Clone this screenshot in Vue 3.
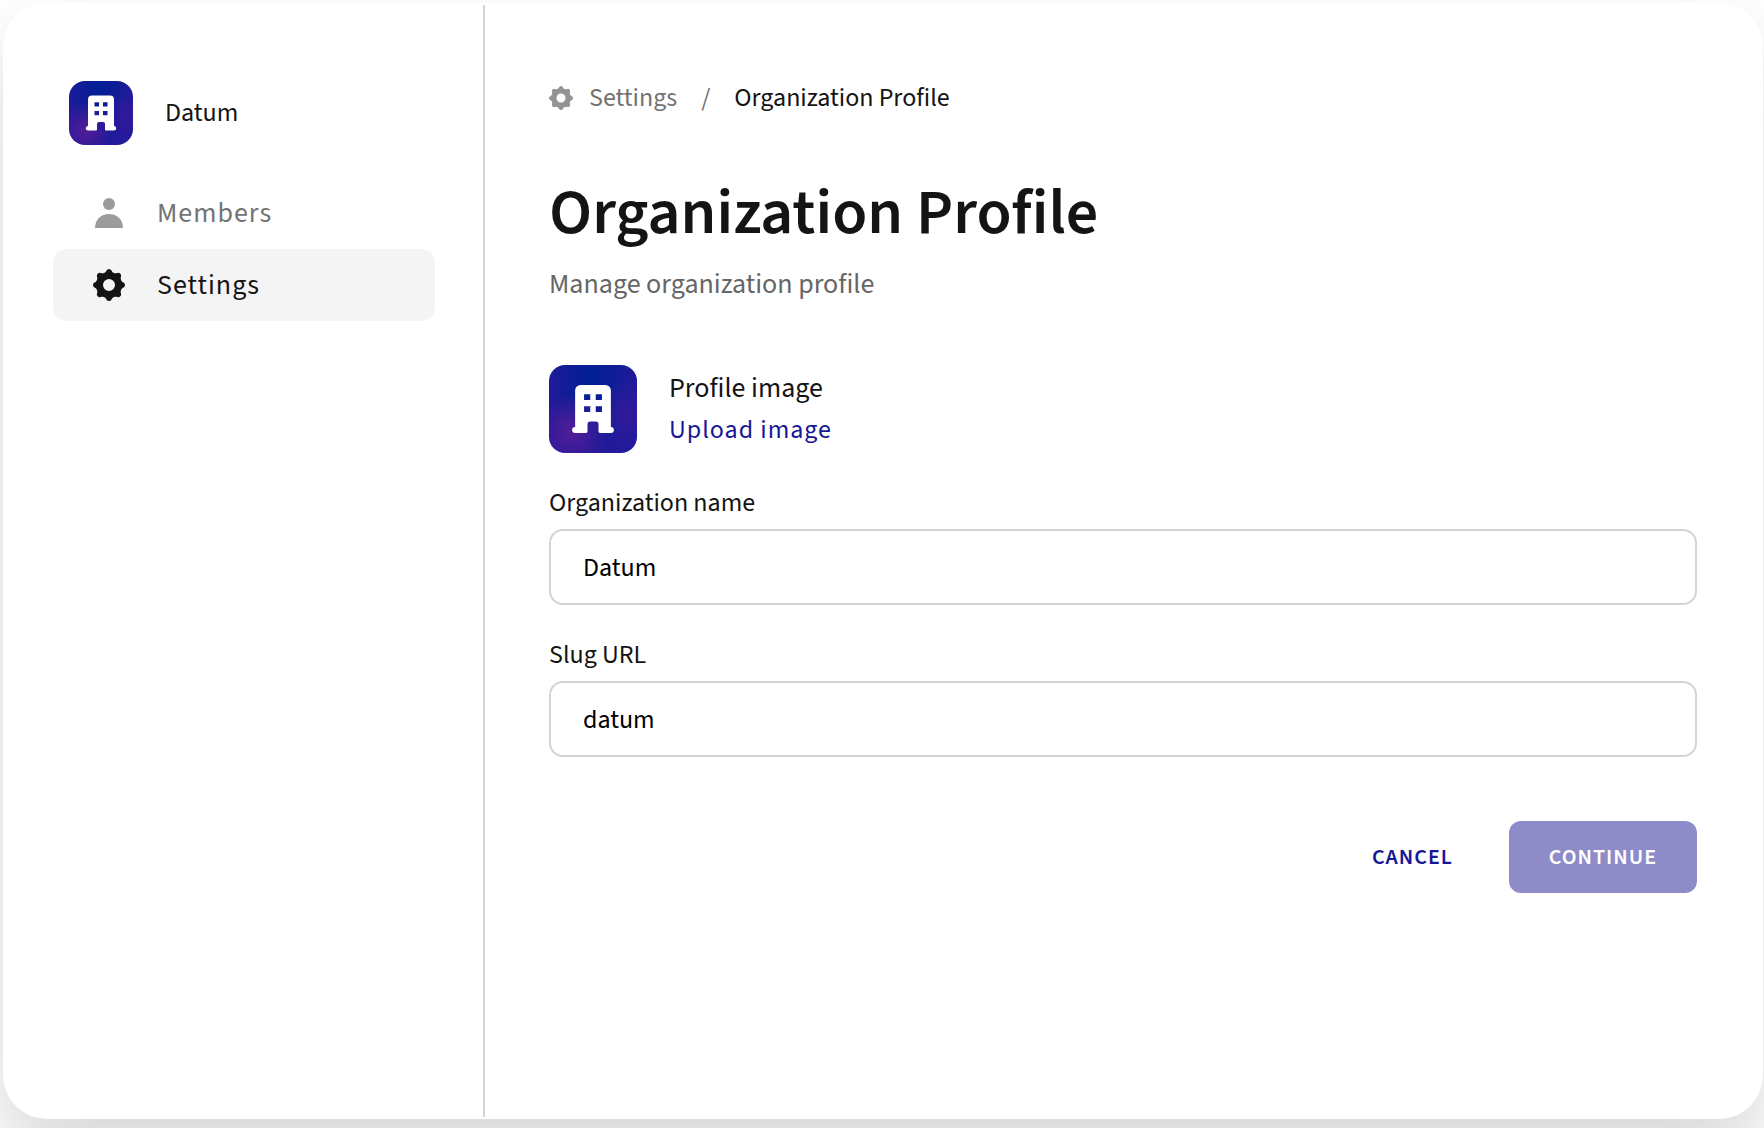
<script setup>
import { ref } from 'vue'

const organizationName = ref('Datum')
const slug = ref('datum')
const teeth = [0, 45, 90, 135, 180, 225, 270, 315]
</script>

<template>
  <div class="page">
    <div class="card">
      <aside class="sidebar">
        <div class="brand">
          <svg class="avatar avatar-small" viewBox="0 0 64 64" aria-hidden="true">
            <path fill="#fff" fill-rule="evenodd" d="M23 14.500h18a4 4 0 0 1 4 4V45a2.200 2.200 0 0 1 0 4.400h-8q-1 0-1-1V43q0-2-2-2h-4q-2 0-2 2v5.400q0 1-1 1h-8a2.200 2.200 0 0 1 0-4.400V18.500a4 4 0 0 1 4-4zM25.500 21.300v4.200h4.500v-4.200zM34 21.300v4.200h4.500v-4.200zM25.500 30v4.200h4.500V30zM34 30v4.200h4.500V30z" />
          </svg>
          <span class="brand-name">Datum</span>
        </div>
        <nav class="menu" aria-label="Organization">
          <a class="menu-item" href="#members">
            <svg class="menu-icon" viewBox="0 0 32 32" aria-hidden="true">
              <circle cx="16" cy="7" r="6" />
              <path d="M2 31C2 22.500 8 17 16 17s14 5.500 14 14z" />
            </svg>
            <span>Members</span>
          </a>
          <a class="menu-item active" href="#settings" aria-current="page">
            <svg class="menu-icon" viewBox="-16 -16 32 32" aria-hidden="true">
              <circle class="gear-ring" r="9.500" />
              <path v-for="angle in teeth" :key="angle" :transform="`rotate(${angle})`" d="M-5.500-11Q-3-13-2.500-14.500Q-1.800-16 0-16T2.500-14.500Q3-13 5.500-11z" />
            </svg>
            <span>Settings</span>
          </a>
        </nav>
      </aside>

      <main class="main">
        <nav class="breadcrumb" aria-label="Breadcrumb">
          <a class="crumb" href="#settings">
            <svg class="crumb-icon" viewBox="-16 -16 32 32" aria-hidden="true">
              <circle class="gear-ring" r="9.500" />
              <path v-for="angle in teeth" :key="angle" :transform="`rotate(${angle})`" d="M-5.500-11Q-3-13-2.500-14.500Q-1.800-16 0-16T2.500-14.500Q3-13 5.500-11z" />
            </svg>
            <span>Settings</span>
          </a>
          <span>/</span>
          <span class="current" aria-current="page">Organization Profile</span>
        </nav>

        <h1 class="title">Organization Profile</h1>
        <p class="subtitle">Manage organization profile</p>

        <form class="form" @submit.prevent>
          <div class="profile">
            <svg class="avatar avatar-large" viewBox="0 0 64 64" aria-hidden="true">
              <path fill="#fff" fill-rule="evenodd" d="M23 14.500h18a4 4 0 0 1 4 4V45a2.200 2.200 0 0 1 0 4.400h-8q-1 0-1-1V43q0-2-2-2h-4q-2 0-2 2v5.400q0 1-1 1h-8a2.200 2.200 0 0 1 0-4.400V18.500a4 4 0 0 1 4-4zM25.500 21.300v4.200h4.500v-4.200zM34 21.300v4.200h4.500v-4.200zM25.500 30v4.200h4.500V30zM34 30v4.200h4.500V30z" />
            </svg>
            <div class="profile-text">
              <span>Profile image</span>
              <button class="upload" type="button">Upload image</button>
            </div>
          </div>

          <div class="field">
            <label for="organization-name">Organization name</label>
            <input id="organization-name" v-model="organizationName" type="text" />
          </div>
          <div class="field">
            <label for="slug">Slug URL</label>
            <input id="slug" v-model="slug" type="text" />
          </div>

          <div class="actions">
            <button class="button cancel" type="button">CANCEL</button>
            <button class="button continue" type="submit" disabled>CONTINUE</button>
          </div>
        </form>
      </main>
    </div>
  </div>
</template>

<style>
body {
  margin: 0;
  background: #fff;
}
</style>

<style scoped>
.page {
  box-sizing: border-box;
  display: flex;
  min-height: 100vh;
  padding: 3px 1px 9px 3px;
  overflow: hidden;
  color: #141414;
  font-family: "Source Sans 3", "Source Sans Pro", "Noto Sans CJK SC", sans-serif;
  font-size: 26px;
  line-height: 34px;
}

.card {
  display: flex;
  flex: 1;
  padding: 2px;
  border-radius: 44px;
  background: #fff;
  box-shadow: 0 40px 80px rgba(0, 0, 0, 0.16);
}

.sidebar {
  box-sizing: border-box;
  flex: none;
  width: 480px;
  padding: 76px 48px;
  border-right: 2px solid #d4d4d4;
}

.brand {
  display: flex;
  align-items: center;
  gap: 32px;
  margin-bottom: 32px;
  padding-left: 16px;
}

.avatar {
  flex: none;
  border-radius: 16px;
  background:
    radial-gradient(circle at 26% 76%, #541c98 0%, rgba(84, 28, 152, 0) 40%),
    radial-gradient(circle at 92% 55%, #321a9a 0%, rgba(50, 26, 154, 0) 36%),
    radial-gradient(ellipse at 48% 16%, #001f94 0%, rgba(0, 31, 148, 0) 75%),
    #221a9a;
}

.avatar-small {
  width: 64px;
  height: 64px;
}

.avatar-large {
  width: 88px;
  height: 88px;
}

.menu {
  display: flex;
  flex-direction: column;
}

.menu-item {
  display: flex;
  align-items: center;
  gap: 32px;
  height: 72px;
  padding: 0 40px;
  border-radius: 14px;
  color: #737373;
  font-size: 28px;
  line-height: 36px;
  letter-spacing: 1px;
  text-decoration: none;
}

.menu-icon {
  width: 32px;
  height: 32px;
  fill: #9c9c9c;
}

.menu-item.active {
  background: #f4f4f4;
  color: #141414;
}

.active .menu-icon {
  fill: #141414;
}

.gear-ring {
  fill: none;
  stroke: #949494;
  stroke-width: 7;
}

.active .gear-ring {
  stroke: #141414;
}

.main {
  flex: 1;
  min-width: 0;
  padding: 76px 64px;
}

.breadcrumb {
  display: flex;
  align-items: center;
  gap: 24px;
  color: #737373;
}

.crumb {
  display: flex;
  align-items: center;
  gap: 16px;
  color: inherit;
  text-decoration: none;
}

.crumb-icon {
  width: 24px;
  height: 24px;
  fill: #949494;
}

.current {
  color: #141414;
}

.title {
  margin: 58px 0 0;
  font-size: 64px;
  font-weight: 600;
  line-height: 80px;
}

.subtitle {
  margin: 14px 0 0;
  color: #666;
  font-size: 28px;
}

.form {
  display: flex;
  flex-direction: column;
  gap: 32px;
  margin-top: 64px;
}

.profile {
  display: flex;
  align-items: center;
  gap: 32px;
}

.profile-text {
  display: flex;
  flex-direction: column;
  align-items: flex-start;
  gap: 8px;
  font-size: 28px;
}

.upload {
  padding: 0;
  border: 0;
  background: none;
  color: #171796;
  font: inherit;
  font-size: 26px;
  letter-spacing: 1px;
}

.field {
  display: flex;
  flex-direction: column;
  gap: 8px;
  line-height: 36px;
}

.field input {
  box-sizing: border-box;
  width: 100%;
  height: 76px;
  padding: 0 32px;
  border: 2px solid #d4d4d4;
  border-radius: 14px;
  background: #fff;
  color: #000;
  font: inherit;
}

.actions {
  display: flex;
  justify-content: flex-end;
  gap: 16px;
  margin-top: 32px;
}

.button {
  height: 72px;
  padding: 0 40px;
  border: 0;
  border-radius: 12px;
  font: inherit;
  font-size: 22px;
  font-weight: 600;
  letter-spacing: 1px;
}

.cancel {
  background: none;
  color: #171796;
}

.continue {
  background: #8e8cc8;
  color: #fff;
}
</style>
